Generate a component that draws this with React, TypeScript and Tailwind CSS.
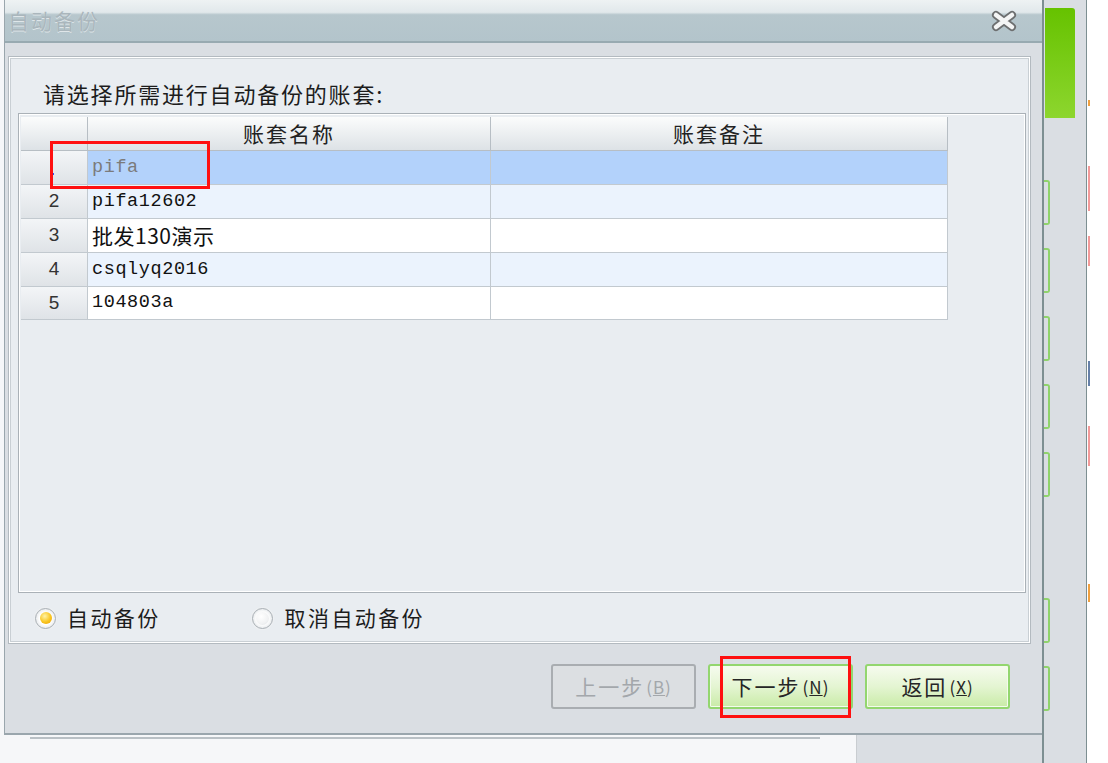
import React from "react";

const cjk = { fontFamily: '"Noto Sans CJK SC", "Liberation Sans", sans-serif' };
const mono = { fontFamily: '"Liberation Mono", "Noto Sans CJK SC", monospace' };

const rows = [
  { no: "", name: "pifa", mono: true, selected: true },
  { no: "2", name: "pifa12602", mono: true },
  { no: "3", name: "批发130演示", mono: false },
  { no: "4", name: "csqlyq2016", mono: true },
  { no: "5", name: "104803a", mono: true },
];

// green side tabs of the window behind
const sideTabs = [
  "mt-[62px]",
  "mt-[23px]",
  "mt-[23px]",
  "mt-[23px]",
  "mt-[23px]",
  "mt-[101px]",
  "mt-[23px]",
];

function Radio({ checked }: { checked?: boolean }) {
  return (
    <div className="flex h-[21px] w-[21px] items-center justify-center rounded-full border border-[#aab0b5] bg-[radial-gradient(circle,#ffffff_45%,#d3d8dc_100%)] shadow-[0_0_0_1px_#eef0f2]">
      <div
        className={
          checked
            ? "h-[12px] w-[12px] rounded-full bg-[radial-gradient(circle_at_40%_35%,#fff3a6_0%,#f9c51f_55%,#e89b06_100%)]"
            : "h-[13px] w-[13px] rounded-full bg-[radial-gradient(circle_at_40%_35%,#ffffff_0%,#f1f2f3_60%,#dcdfe2_100%)]"
        }
      />
    </div>
  );
}

function Btn({ label, k, disabled }: { label: string; k: string; disabled?: boolean }) {
  return (
    <button
      className={
        disabled
          ? "flex h-[45px] w-[145px] items-center justify-center rounded-[3px] border-2 border-[#a9adb1] bg-[#dcdfe2] text-[21px] text-[#a3a7ab]"
          : "flex h-[45px] w-[145px] items-center justify-center rounded-[3px] border-2 border-[#93d66f] bg-[linear-gradient(to_bottom,#f6fbef_0%,#e4f5d2_50%,#c9eba7_100%)] text-[21px] text-[#262626] shadow-[inset_0_0_0_1px_#f4fbec]"
      }
      style={cjk}
    >
      <span className="tracking-[2px]">{label}</span>
      <span className="ml-[2px] text-[17px] tracking-[1px]">
        (<span className="underline">{k}</span>)
      </span>
    </button>
  );
}

export default function App() {
  return (
    <div className="relative flex h-[763px] w-[1108px] overflow-hidden bg-[#f6f7f9]" style={cjk}>
      {/* 左：对话框 */}
      <div className="flex w-[1042px] flex-col">
        <div className="ml-[4px] flex h-[735px] flex-col border-l border-b-2 border-[#9aa6ad] bg-[#dadee3]">
          {/* 标题栏 */}
          <div className="flex h-[43px] items-center justify-between border-b-2 border-[#98aab1] bg-[linear-gradient(to_bottom,#eef2f3_0%,#e1e8eb_30%,#b7c7cd_36%,#b3c4cb_100%)] pl-[3px] pr-[24px]">
            <span className="text-[21px] tracking-[2px] text-[#aab6bc] [text-shadow:0_1px_0_#dfe6e9]">
              自动备份
            </span>
            <svg width="28" height="22" viewBox="0 0 28 22">
              <path d="M6 5 L22 17 M22 5 L6 17" stroke="#6d6f70" strokeWidth="8" strokeLinecap="round" />
              <path d="M6 5 L22 17 M22 5 L6 17" stroke="#f4f5f5" strokeWidth="4.5" strokeLinecap="round" />
            </svg>
          </div>

          {/* 内容面板 */}
          <div className="ml-[3px] mr-[11px] mt-[13px] flex h-[588px] flex-col border border-[#b3bac0] bg-[#e9edf1] shadow-[inset_0_0_0_1px_#ffffff,inset_0_0_0_2px_#c9cfd4]">
            <div className="pl-[34px] pt-[22px] text-[22px] leading-[28px] tracking-[1.8px] text-[#1c1c1c]">
              请选择所需进行自动备份的账套:
            </div>

            {/* 表格 */}
            <div className="ml-[9px] mr-[4px] mt-[6px] h-[480px] border border-[#aab1b7] p-[2px] pt-[3px] shadow-[inset_0_0_0_1px_#ffffff]">
              <div className="flex h-[34px] text-[21px] tracking-[2px] text-[#222]">
                <div className="w-[67px] border-b border-r border-[#b7bec4] bg-[linear-gradient(to_bottom,#fbfcfc,#dde2e6)]" />
                <div className="flex w-[403px] items-center justify-center border-b border-r border-[#b7bec4] bg-[linear-gradient(to_bottom,#fbfcfc,#dde2e6)]">
                  账套名称
                </div>
                <div className="flex w-[457px] items-center justify-center border-b border-r border-[#b7bec4] bg-[linear-gradient(to_bottom,#fbfcfc,#dde2e6)]">
                  账套备注
                </div>
              </div>
              {rows.map((r, i) => {
                const bg = r.selected ? "bg-[#b3d2fb]" : i % 2 === 1 ? "bg-[#ebf3fd]" : "bg-white";
                return (
                  <div key={i} className={i === 4 ? "flex h-[33px]" : "flex h-[34px]"}>
                    <div className="relative flex w-[67px] items-center justify-center border-b border-r border-[#c2c9cf] bg-[linear-gradient(to_bottom,#f3f5f7,#dfe3e7)] text-[19px] text-[#333]" style={{ fontFamily: '"Liberation Sans", sans-serif' }}>
                      {r.no}
                      {r.selected && <div className="absolute left-[31px] top-[22px] h-[2px] w-[2px] bg-[#3a4ff0]" />}
                    </div>
                    <div
                      className={`flex w-[403px] items-center border-b border-r border-[#c2c9cf] pl-[4px] ${bg} ${
                        r.mono ? "text-[18.5px] tracking-[0.6px]" : "text-[21px] tracking-[0.5px]"
                      } ${r.selected ? "text-[#7b7b7b]" : "text-[#111]"}`}
                      style={r.mono ? mono : cjk}
                    >
                      {r.name}
                    </div>
                    <div className={`w-[457px] border-b border-r border-[#c2c9cf] ${bg}`} />
                  </div>
                );
              })}
            </div>

            {/* 单选 */}
            <div className="flex flex-1 items-center pl-[26px] text-[21px] tracking-[2.4px] text-[#1c1c1c]">
              <Radio checked />
              <span className="ml-[11px]">自动备份</span>
              <div className="ml-[91px]">
                <Radio />
              </div>
              <span className="ml-[12px]">取消自动备份</span>
            </div>
          </div>

          {/* 按钮 */}
          <div className="mr-[32px] mt-[20px] flex justify-end gap-[12px]">
            <Btn label="上一步" k="B" disabled />
            <Btn label="下一步" k="N" />
            <Btn label="返回" k="X" />
          </div>
        </div>
        {/* 下方窗口残影 */}
        <div className="flex flex-1">
          <div className="ml-[30px] mt-[2px] w-[790px] border-t-2 border-[#b9c0c5] bg-[#f6f7f9]" />
          <div className="ml-[36px] flex-1 border-l border-[#c9cdd1] bg-[#dadee3]" />
        </div>
      </div>

      {/* 右侧后面窗口 */}
      <div className="flex w-[45px] flex-col border-l-2 border-r border-[#7d8f92] bg-[#dadee3]">
        <div className="ml-[1px] mt-[8px] h-[110px] w-[30px] rounded-tr-[3px] bg-[linear-gradient(to_bottom,#66c200,#8dd62e)]" />
        {sideTabs.map((m, i) => (
          <div key={i} className={`${m} h-[45px] w-[6px] rounded-r-[3px] border-2 border-l-0 border-[#8fd36b]`} />
        ))}
      </div>
      <div className="flex flex-1 flex-col bg-white">
        <div className="ml-[1px] mt-[100px] h-[6px] w-[2px] bg-[#f0a040]" />
        <div className="ml-[1px] mt-[60px] h-[45px] w-[2px] bg-[#f29a9a]" />
        <div className="ml-[1px] mt-[25px] h-[30px] w-[2px] bg-[#f29a9a]" />
        <div className="ml-[1px] mt-[95px] h-[25px] w-[2px] bg-[#6680a8]" />
        <div className="ml-[1px] mt-[40px] h-[40px] w-[2px] bg-[#f29a9a]" />
        <div className="ml-[1px] mt-[118px] h-[18px] w-[2px] bg-[#f0a040]" />
      </div>

      {/* 红框标注 */}
      <div className="absolute left-[50px] top-[141px] h-[48px] w-[160px] border-[3px] border-[#ff1010]" />
      <div className="absolute left-[720px] top-[656px] h-[62px] w-[131px] border-[3px] border-[#ff1010]" />
    </div>
  );
}
